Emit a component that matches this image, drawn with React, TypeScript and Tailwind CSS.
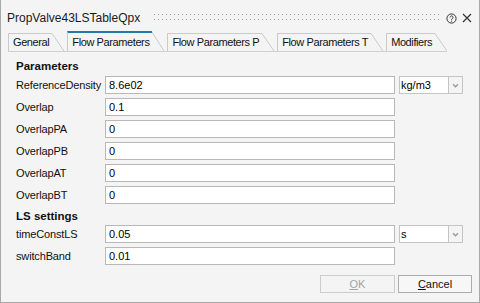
import React from "react";

const font = { fontFamily: '"Liberation Sans", Arial, sans-serif' };

const tabs = [
	{ label: "General", active: false },
	{ label: "Flow Parameters", active: true },
	{ label: "Flow Parameters P", active: false },
	{ label: "Flow Parameters T", active: false },
	{ label: "Modifiers", active: false },
];

interface FieldRow {
	label: string;
	value: string;
	unit?: string;
}

const parameterRows: FieldRow[] = [
	{ label: "ReferenceDensity", value: "8.6e02", unit: "kg/m3" },
	{ label: "Overlap", value: "0.1" },
	{ label: "OverlapPA", value: "0" },
	{ label: "OverlapPB", value: "0" },
	{ label: "OverlapAT", value: "0" },
	{ label: "OverlapBT", value: "0" },
];

const lsRows: FieldRow[] = [
	{ label: "timeConstLS", value: "0.05", unit: "s" },
	{ label: "switchBand", value: "0.01" },
];

function Tab({ label, active }: { label: string; active: boolean }) {
	const h = active ? 20 : 18;
	return (
		<div className={`flex ${active ? "h-[20px]" : "h-[18px]"}`}>
			<div
				className={`flex items-center pl-[4px] pr-[3px] border-l border-l-[#cacaca] ${
					active ? "border-t-2 border-t-[#1f7ca6]" : "border-t border-t-[#cacaca]"
				} text-[11px] tracking-[-0.4px] text-[#111] leading-none whitespace-nowrap`}
			>
				{label}
			</div>
			<svg width="12" height={h} className="block">
				<line x1="0" y1={active ? 1 : 0.5} x2="12" y2={h} stroke="#cacaca" strokeWidth="1" />
			</svg>
		</div>
	);
}

function Row({ row }: { row: FieldRow }) {
	return (
		<div className="flex items-center h-[18px]">
			<span className="w-[89px] text-[11px] tracking-[-0.15px] text-[#111] whitespace-nowrap">
				{row.label}
			</span>
			<div className="w-[290px] h-[18px] bg-white border border-[#b8b8b8] flex items-center pl-[3px] text-[11px] text-black">
				{row.value}
			</div>
			{row.unit && (
				<div className="flex ml-[4px]">
					<div className="w-[50px] h-[18px] bg-white border border-[#c4c4c4] flex items-center pl-[1px] text-[11px] text-black">
						{row.unit}
					</div>
					<div className="w-[15px] h-[18px] -ml-px border border-[#c4c4c4] flex items-center justify-center">
						<svg width="7" height="5" viewBox="0 0 7 5">
							<path d="M1 1.2 L3.5 3.7 L6 1.2" fill="none" stroke="#9a9a9a" strokeWidth="1.4" />
						</svg>
					</div>
				</div>
			)}
		</div>
	);
}

export default function App() {
	return (
		<div
			className="w-[480px] h-[303px] bg-[#f4f4f4] border-l border-r border-b border-[#a8a8a8] flex flex-col"
			style={font}
		>
			{/* title bar */}
			<div className="h-[31px] flex pl-[6px] pt-[11px]">
				<span className="text-[12px] leading-[14px] text-[#1a1a1a]">PropValve43LSTableQpx</span>
				<svg className="ml-[14px] mt-[3px] flex-1" height="7">
					<defs>
						<pattern id="grip" width="4" height="5" patternUnits="userSpaceOnUse">
							<rect x="0" y="0" width="1" height="1" fill="#9c9c9c" />
						</pattern>
					</defs>
					<rect x="0" y="0" width="100%" height="7" fill="url(#grip)" />
				</svg>
				<div className="flex items-start gap-[5px] ml-[6px] mr-[7px] mt-[2px]">
					<svg width="11" height="11" viewBox="0 0 11 11">
						<circle cx="5.5" cy="5.5" r="4.6" fill="none" stroke="#333" strokeWidth="1" />
						<path
							d="M4 4.4a1.5 1.5 0 1 1 2.3 1.3c-.5.3-.8.5-.8 1.1"
							fill="none"
							stroke="#333"
							strokeWidth="1"
						/>
						<rect x="5" y="7.6" width="1" height="1" fill="#333" />
					</svg>
					<svg width="10" height="10" viewBox="0 0 10 10">
						<path d="M1 1 L9 9 M9 1 L1 9" stroke="#333" strokeWidth="1.2" />
					</svg>
				</div>
			</div>

			{/* tabs */}
			<div className="pl-[7px]">
				<div className="flex items-end gap-[3px] w-fit h-[21px] border-b border-[#d0d0d0]">
					{tabs.map((t) => (
						<Tab key={t.label} label={t.label} active={t.active} />
					))}
				</div>
			</div>

			{/* content */}
			<div className="flex flex-col pl-[15px] flex-1">
				<div className="mt-[6px] text-[11.5px] leading-[16px] font-bold text-[#111]">Parameters</div>
				<div className="flex flex-col gap-[4px] mt-[2px]">
					{parameterRows.map((r) => (
						<Row key={r.label} row={r} />
					))}
				</div>
				<div className="mt-[4px] text-[11.5px] leading-[16px] font-bold text-[#111]">LS settings</div>
				<div className="flex flex-col gap-[4px] mt-[1px]">
					{lsRows.map((r) => (
						<Row key={r.label} row={r} />
					))}
				</div>
			</div>

			{/* buttons */}
			<div className="flex justify-end gap-[3px] pr-[7px] pb-[9px]">
				<div className="w-[75px] h-[18px] border border-[#cccccc] bg-[#f4f4f4] flex items-center justify-center text-[11px] text-[#a3a3a3]">
					<span>
						<span className="underline">O</span>K
					</span>
				</div>
				<div className="w-[74px] h-[18px] border border-[#adadad] bg-[#f7f7f7] flex items-center justify-center text-[11px] text-[#111]">
					<span>
						<span className="underline">C</span>ancel
					</span>
				</div>
			</div>
		</div>
	);
}
